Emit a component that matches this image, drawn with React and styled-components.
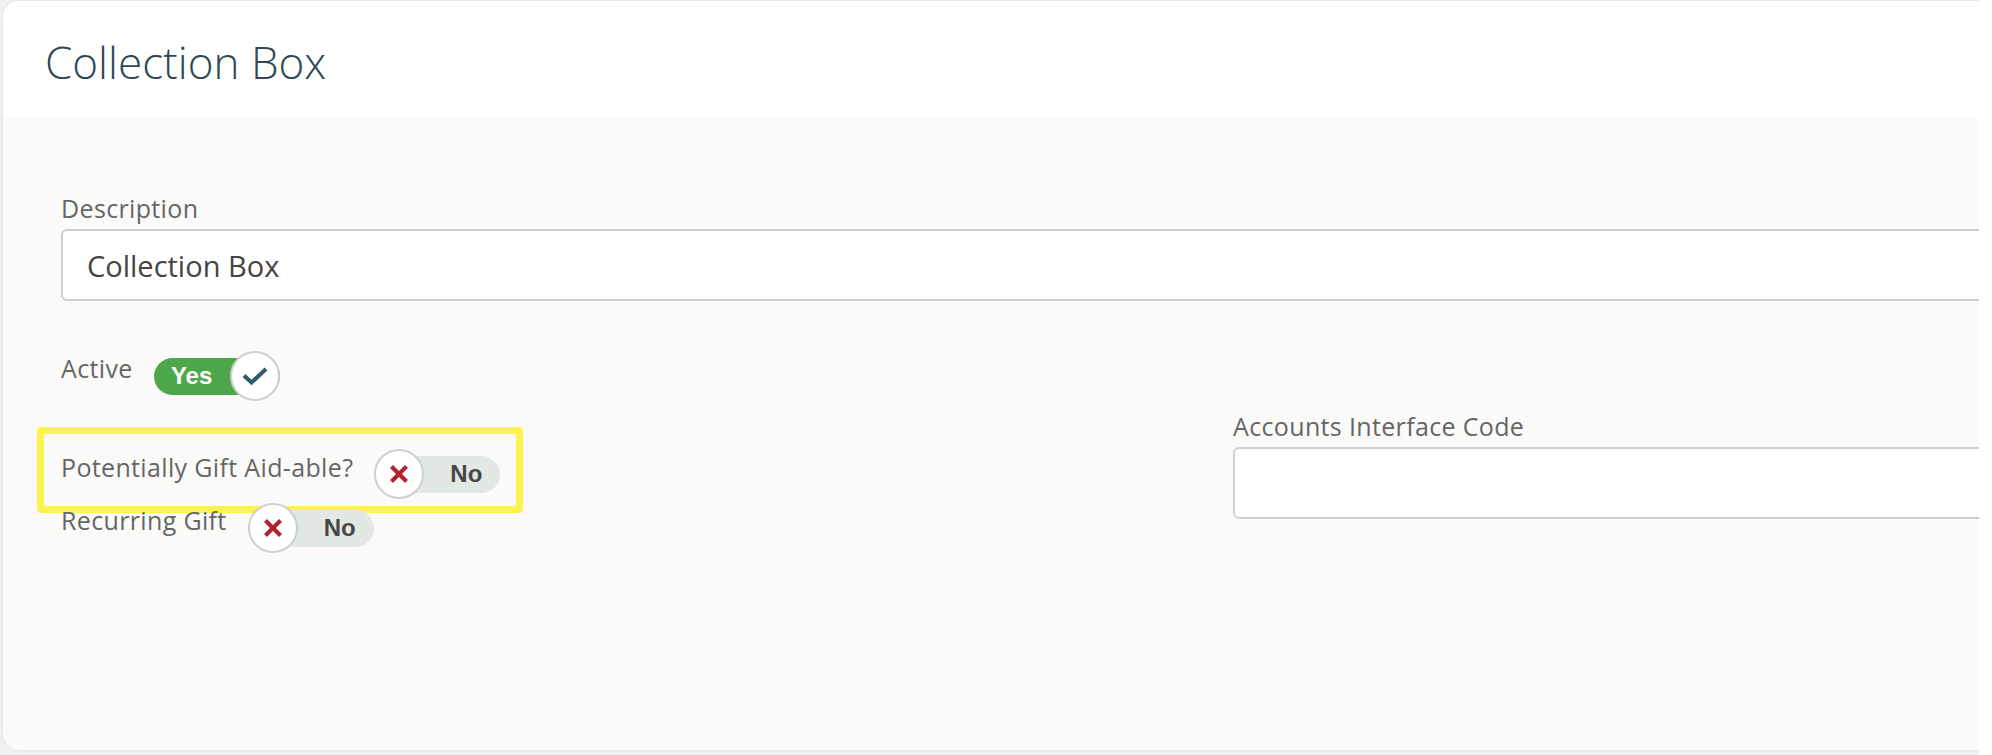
import React from "react";
import styled, { createGlobalStyle } from "styled-components";

const GlobalStyle = createGlobalStyle`
  html, body {
    margin: 0;
    padding: 0;
    background: #ffffff;
  }
  * {
    box-sizing: border-box;
  }
`;

const Page = styled.div`
  width: 1979px;
  height: 755px;
  overflow: hidden;
  padding: 1px 0 5px 3px;
  background: #f1f1f0;
  font-family: "Open Sans", "Noto Sans", sans-serif;
`;

const Card = styled.div`
  width: 2430px;
  height: 100%;
  border-radius: 16px;
  overflow: hidden;
  background: #fafaf8;
  box-shadow: 0 0 3px rgba(0, 0, 0, 0.1);
  display: flex;
  flex-direction: column;
`;

const Header = styled.div`
  height: 117px;
  background: #ffffff;
  padding: 35px 0 0 42px;
`;

const Title = styled.h1`
  margin: 0;
  font-size: 44px;
  line-height: 1.2;
  font-weight: 300;
  letter-spacing: 0;
  color: #2e4856;
`;

const Body = styled.div`
  padding: 73px 58px 0 58px;
  display: grid;
  grid-template-columns: 1142px 1142px;
  column-gap: 30px;
  align-items: start;
`;

const Field = styled.div`
  grid-column: ${p => (p.$wide ? "1 / -1" : "auto")};
  margin-top: ${p => p.$offset || 0}px;
  display: flex;
  flex-direction: column;
`;

const Label = styled.label`
  font-size: 25px;
  line-height: 35px;
  letter-spacing: 0.35px;
  color: #666666;
  margin-bottom: 3px;
`;

const Input = styled.input`
  height: 72px;
  width: 100%;
  border: 2px solid #cfcfcf;
  border-radius: 6px;
  background: #ffffff;
  padding: 0 24px 0 24px;
  font-family: "Open Sans", "Noto Sans", sans-serif;
  font-size: 29px;
  color: #444444;
  outline: none;
`;

const Column = styled.div`
  display: flex;
  flex-direction: column;
  margin-top: 50px;
`;

const ToggleRow = styled.div`
  position: relative;
  display: flex;
  align-items: flex-start;
  gap: 21px;
  margin-top: ${p => p.$gap || 0}px;
`;

const RowLabel = styled.span`
  font-size: 25px;
  line-height: 35px;
  letter-spacing: 0.35px;
  color: #666666;
  padding-top: ${p => p.$drop || 0}px;
  white-space: nowrap;
`;

const Highlight = styled.div`
  position: absolute;
  left: -24px;
  top: -22px;
  width: 486px;
  height: 86px;
  border: 7px solid #fdf24e;
  border-radius: 4px;
  pointer-events: none;
`;

const Switch = styled.div`
  position: relative;
  width: 126px;
  height: 50px;
  flex-shrink: 0;
  display: flex;
  align-items: center;
`;

const Track = styled.div`
  width: 100%;
  height: 37px;
  border-radius: 19px;
  background: ${p => (p.$on ? "#4ea84b" : "#e2e8e4")};
  color: ${p => (p.$on ? "#ffffff" : "#474747")};
  display: flex;
  align-items: center;
  justify-content: center;
  padding: ${p => (p.$on ? "0 50px 0 0" : "0 0 0 58px")};
  font-family: "Liberation Sans", Arial, sans-serif;
  font-weight: bold;
  font-size: 24px;
`;

const Knob = styled.div`
  position: absolute;
  top: 0;
  ${p => (p.$on ? "right: 0;" : "left: 0;")}
  width: 50px;
  height: 50px;
  border-radius: 50%;
  background: #ffffff;
  border: 2px solid #cfcfcf;
  display: flex;
  align-items: center;
  justify-content: center;
`;

const CheckIcon = () => (
  <svg width="26" height="20" viewBox="0 0 26 20">
    <path d="M2 9.5 L9.5 16.5 L24 3" fill="none" stroke="#2f5c66" strokeWidth="4" strokeLinejoin="miter" />
  </svg>
);

const CrossIcon = () => (
  <svg width="20" height="20" viewBox="0 0 20 20">
    <path d="M2.5 2.5 L17.5 17.5 M17.5 2.5 L2.5 17.5" fill="none" stroke="#b3212b" strokeWidth="4.2" />
  </svg>
);

const Toggle = ({ on }) => (
  <Switch>
    <Track $on={on}>{on ? "Yes" : "No"}</Track>
    <Knob $on={on}>{on ? <CheckIcon /> : <CrossIcon />}</Knob>
  </Switch>
);

export default function App() {
  return (
    <>
      <GlobalStyle />
      <Page>
        <Card>
          <Header>
            <Title>Collection Box</Title>
          </Header>
          <Body>
            <Field $wide>
              <Label>Description</Label>
              <Input defaultValue="Collection Box" />
            </Field>
            <Column>
              <ToggleRow>
                <RowLabel>Active</RowLabel>
                <Toggle on />
              </ToggleRow>
              <ToggleRow $gap={48}>
                <Highlight />
                <RowLabel $drop={1}>Potentially Gift Aid-able?</RowLabel>
                <Toggle on={false} />
              </ToggleRow>
              <ToggleRow $gap={4}>
                <RowLabel>Recurring Gift</RowLabel>
                <Toggle on={false} />
              </ToggleRow>
            </Column>
            <Field $offset={108}>
              <Label>Accounts Interface Code</Label>
              <Input />
            </Field>
          </Body>
        </Card>
      </Page>
    </>
  );
}
